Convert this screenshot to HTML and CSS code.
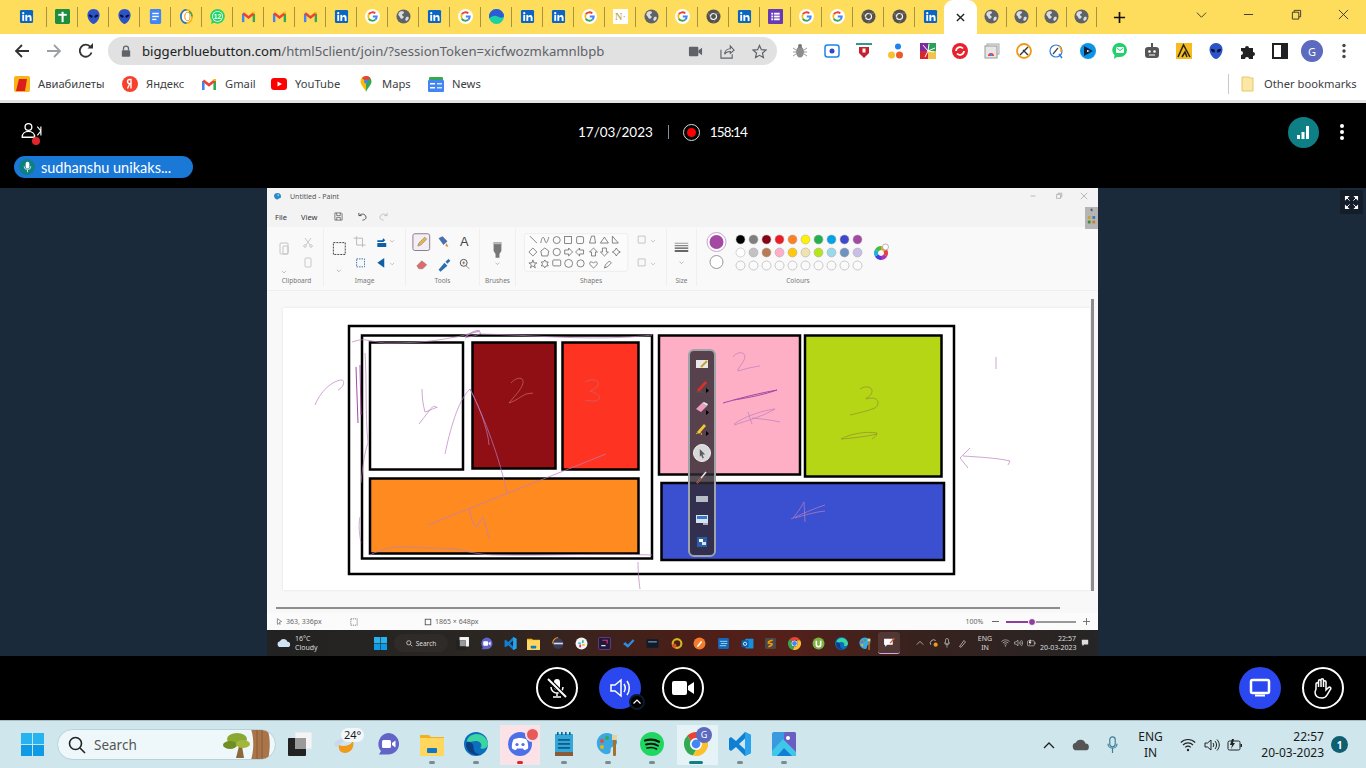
FILE: index.html
```html
<!DOCTYPE html>
<html lang="en">
<head>
    <meta name="viewport" content="width=device-width, initial-scale=1.0">
    <meta charset="UTF-8">
    <title>BigBlueButton</title>
    <link rel="stylesheet" href="styles.css">
</head>
<body>
    <!-- Shared icons -->
    <svg class="sprite" aria-hidden="true">
        <symbol id="in" viewBox="0 0 16 16"><rect x="1" y="1" width="14" height="14" rx="1.5" fill="#0a66c2"/><g fill="#fff"><circle cx="4.5" cy="4.4" r="1.2"/><rect x="3.5" y="6.3" width="2" height="6.4"/><rect x="6.8" y="6.3" width="2" height="6.4"/><path d="M8.6 8.6c.3-2.800 4.800-3.200 4.800.6v3.500h-2V9.500c0-1.500-2.800-1.400-2.800.3z"/></g></symbol>
        <symbol id="cross" viewBox="0 0 16 16"><rect x="0" y="0" width="16" height="16" rx="1.500" fill="#1e8e3e"/><rect x="7" y="3" width="2.200" height="11" fill="#fff"/><rect x="3.500" y="5.200" width="9" height="2" fill="#fff"/></symbol>
        <symbol id="alien" viewBox="0 0 16 16"><path d="M8 0C4 0 1.500 3 1.500 6.500 1.500 11 5.500 16 8 16s6.500-5 6.500-9.500C14.500 3 12 0 8 0z" fill="#2b54c9"/><ellipse cx="5" cy="7.500" rx="2.300" ry="1.300" transform="rotate(30 5 7.500)" fill="#0b1030"/><ellipse cx="11" cy="7.500" rx="2.300" ry="1.300" transform="rotate(-30 11 7.500)" fill="#0b1030"/></symbol>
        <symbol id="docs" viewBox="0 0 16 16"><rect x="2" y="0" width="12" height="16" rx="1.500" fill="#4285f4"/><g fill="#fff"><rect x="4.500" y="4" width="7" height="1.500"/><rect x="4.500" y="7.200" width="7" height="1.500"/><rect x="4.500" y="10.400" width="4.500" height="1.500"/></g></symbol>
        <symbol id="ring" viewBox="0 0 16 16"><ellipse cx="8" cy="8" rx="6" ry="7" fill="#fff" stroke="#f4b400" stroke-width="1.800"/><path d="M8 1C4.500 1 2 4 2 8s2.500 7 6 7" fill="none" stroke="#1a73e8" stroke-width="1.800"/><path d="M11 2.500c2 1.500 3 3.500 3 5.500" fill="none" stroke="#34a853" stroke-width="1.800"/><ellipse cx="9" cy="8" rx="2.800" ry="4.500" fill="none" stroke="#ea8600" stroke-width="1"/></symbol>
        <symbol id="gmail" viewBox="0 0 16 16"><g fill="none" stroke-width="2.600"><path d="M2.300 14V5" stroke="#4285f4"/><path d="M13.700 14V5" stroke="#34a853"/><path d="M2.300 4.500L8 9l5.700-4.500" stroke="#ea4335"/><path d="M13.700 3v2" stroke="#fbbc04"/></g></symbol>
        <symbol id="g" viewBox="0 0 16 16"><circle cx="8" cy="8" r="8" fill="#fff"/><g fill="none" stroke-width="2"><path d="M4.100 5.700A4.500 4.500 0 0 1 11 4.700" stroke="#ea4335"/><path d="M4.100 5.700a4.500 4.500 0 0 0 0 4.600" stroke="#fbbc04"/><path d="M4.100 10.300A4.500 4.500 0 0 0 11 11.300" stroke="#34a853"/><path d="M11 11.300A4.500 4.500 0 0 0 12.500 8H8.300" stroke="#4285f4"/></g></symbol>
        <symbol id="globe" viewBox="0 0 16 16"><circle cx="8" cy="8" r="7.500" fill="#5f6368"/><path d="M5 2.500c2-.6 4 0 3.500 1.500S6 5 6.500 6.500 9 7.500 8 9 5 11 4.500 9 2 7 2.500 5.500 4 3 5 2.500zM11 8.500c1.500-.8 3 0 2.500 1.500s-2 3-3 2.500-.5-3 .5-4z" fill="#dadce0"/></symbol>
        <symbol id="wave" viewBox="0 0 16 16"><circle cx="8" cy="8" r="8" fill="#19d3a2"/><path d="M0 8a8 8 0 0 1 16 0c-3 2.500-5 .5-8-.5S3 8 0 10z" fill="#2d5bd7"/></symbol>
        <symbol id="chromeg" viewBox="0 0 16 16"><circle cx="8" cy="8" r="7.500" fill="#55524e"/><circle cx="8" cy="8" r="3.800" fill="#fff"/><circle cx="8" cy="8" r="2.600" fill="#55524e"/><path d="M8 4.500h6.500M5 9.500L2 4M10.500 10.500L7.500 15" stroke="#8a8885" stroke-width=".800"/></symbol>
        <symbol id="forms" viewBox="0 0 16 16"><rect width="16" height="16" rx="1" fill="#673ab7"/><g fill="#fff"><rect x="3.500" y="4" width="2" height="2"/><rect x="3.500" y="7" width="2" height="2"/><rect x="3.500" y="10" width="2" height="2"/><rect x="6.500" y="4" width="6" height="2"/><rect x="6.500" y="7" width="6" height="2"/><rect x="6.500" y="10" width="6" height="2"/></g></symbol>

        <symbol id="win" viewBox="0 0 24 24"><g fill="#0f9ae6"><rect x="0" y="0" width="11.500" height="11.500" fill="#27b2f0"/><rect x="12.500" y="0" width="11.500" height="11.500" fill="#27b2f0"/><rect x="0" y="12.500" width="11.500" height="11.500"/><rect x="12.500" y="12.500" width="11.500" height="11.500"/></g></symbol>
        <symbol id="taskview" viewBox="0 0 24 24"><rect x="7" y="0" width="17" height="17" rx="1" fill="#f4f4f4" stroke="#dfe6e8"/><rect x="0" y="6" width="18" height="18" rx="1" fill="#222"/><path d="M7 6h11v11H7z" fill="#9a9a9a"/></symbol>
        <symbol id="meet" viewBox="0 0 24 24"><path d="M12 1a11 11 0 0 1 11 11c0 6-5 10.500-11 10.500H3L5 19a11 11 0 0 1 7-18z" fill="#6264c8"/><rect x="6" y="8" width="9" height="8" rx="1.500" fill="#fff"/><path d="M16 11l3.500-2.500v7L16 13z" fill="#fff"/></symbol>
        <symbol id="folder" viewBox="0 0 24 24"><path d="M0 3h9l2 2h13v19H0z" fill="#f3b21b"/><rect x="0" y="6" width="24" height="18" fill="#ffd75e"/><rect x="7" y="16" width="10" height="5" rx="1" fill="#0f78c9"/></symbol>
        <symbol id="edge" viewBox="0 0 24 24"><circle cx="12" cy="12" r="12" fill="#0c6fbd"/><path d="M3 8C6 0 21-1 24 11c.500 5-5 7-8 5 3-2 1-7-4-7C7 9 3 12 3 8z" fill="#3bd5a4"/><path d="M2 12c0 8 8 13 15 10-5 1-8-3-7.500-8C9 11 3 7 2 12z" fill="#0a3f85"/></symbol>
        <symbol id="discord" viewBox="0 0 24 24"><circle cx="12" cy="12" r="12" fill="#4d6fe8"/><path d="M5.500 7.500c4-2 9-2 13 0 1.500 3 2 6 1.500 9-1.500 1-3 1.500-4 1.500l-1-1.500h-6L8 18c-1 0-2.500-.5-4-1.500-.5-3 0-6 1.500-9z" fill="#fff"/><circle cx="9" cy="12.500" r="1.600" fill="#4d6fe8"/><circle cx="15" cy="12.500" r="1.600" fill="#4d6fe8"/></symbol>
        <symbol id="notepad" viewBox="0 0 24 24"><rect x="3" y="2" width="18" height="19" fill="#35a6d8"/><rect x="3" y="20" width="18" height="4" fill="#8a5a3a"/><g fill="#0b5f8f"><rect x="5" y="0" width="1.600" height="3"/><rect x="9" y="0" width="1.600" height="3"/><rect x="13" y="0" width="1.600" height="3"/><rect x="17" y="0" width="1.600" height="3"/><rect x="6" y="7" width="12" height="1.800"/><rect x="6" y="11" width="12" height="1.800"/><rect x="6" y="15" width="12" height="1.800"/></g></symbol>
        <symbol id="palette" viewBox="0 0 24 24"><path d="M11 1C4 1 0 7 1 13s7 10 11 9 2-4 3-6 5-1 6-5-4-10-10-10z" fill="#38a9e3"/><circle cx="6" cy="9" r="2" fill="#e84b3c"/><circle cx="6" cy="15" r="2" fill="#f4b400"/><circle cx="11" cy="6" r="2" fill="#34a853"/><rect x="17" y="6" width="3" height="18" rx="1" fill="#a8702f"/><rect x="16" y="3" width="5" height="5" fill="#e8d29a"/></symbol>
        <symbol id="spotify" viewBox="0 0 24 24"><circle cx="12" cy="12" r="12" fill="#1ed760"/><g fill="none" stroke="#111" stroke-linecap="round"><path d="M5 8.500c5-1.500 10-1 14 1.300" stroke-width="2.200"/><path d="M6 12.500c4-1 9-.7 12 1.200" stroke-width="1.900"/><path d="M7 16c3-.8 7-.5 9.500 1" stroke-width="1.600"/></g></symbol>
        <symbol id="chrome" viewBox="0 0 24 24"><path d="M12 0a12 12 0 0 1 10.400 6H12a6 6 0 0 0-5.200 3L3.500 3.500A12 12 0 0 1 12 0z" fill="#ea4335"/><path d="M3.500 3.500L6.800 9a6 6 0 0 0 5.200 9l-3 5.600A12 12 0 0 1 3.500 3.500z" fill="#34a853"/><path d="M22.400 6A12 12 0 0 1 9 23.600L12 18a6 6 0 0 0 5.200-9l-.5-3z" fill="#fbc02d"/><circle cx="12" cy="12" r="5.600" fill="#fff"/><circle cx="12" cy="12" r="4.400" fill="#4285f4"/></symbol>
        <symbol id="vscode" viewBox="0 0 24 24"><path d="M17 0l6 3v18l-6 3-9-9-5 4-2-1.500V6.500L3 5l5 4zM17 6.500L11 12l6 5.500z" fill="#0f7fd4"/><path d="M17 0l6 3v18l-6 3z" fill="#2aa3ee"/></symbol>
        <symbol id="photos" viewBox="0 0 24 24"><rect x="0" y="0" width="24" height="24" rx="2" fill="#3a9ae0"/><rect x="12" y="0" width="12" height="24" rx="2" fill="#6a5fc1"/><circle cx="16" cy="6" r="2" fill="#fff"/><path d="M0 19L11 7l13 13v2a2 2 0 0 1-2 2H2a2 2 0 0 1-2-2z" fill="#3fc6e8"/><path d="M5 24l7-8 8 8z" fill="#0f7fd4"/></symbol>
        <symbol id="cloud" viewBox="0 0 24 16"><path d="M6 15a5 5 0 0 1-1-9.900A7 7 0 0 1 18 6a4.500 4.500 0 0 1 0 9z" fill="currentColor"/></symbol>
        <symbol id="wifi" viewBox="0 0 16 14"><g fill="none" stroke="currentColor" stroke-width="1.100"><path d="M.8 4.500c4-4 10.400-4 14.400 0"/><path d="M3 7c2.800-2.800 7.200-2.800 10 0"/><path d="M5.200 9.400c1.600-1.500 4-1.500 5.600 0"/></g><circle cx="8" cy="12" r="1.200" fill="currentColor"/></symbol>
        <symbol id="vol" viewBox="0 0 16 14"><path d="M1 5h2.500L7 2v10L3.500 9H1z" fill="none" stroke="currentColor"/><path d="M9 5c1 1.300 1 2.700 0 4M11 3c2 2.500 2 5.500 0 8M13 1.500c3 3.500 3 7.500 0 11" fill="none" stroke="currentColor"/></symbol>
        <symbol id="batt" viewBox="0 0 16 14"><rect x="1" y="3" width="12" height="9" rx="1.500" fill="none" stroke="currentColor"/><rect x="13.500" y="6" width="1.500" height="3" fill="currentColor"/><path d="M5 1L3 7h2l-1 4 4-6H6l1-4z" fill="currentColor"/></symbol>
        <symbol id="micline" viewBox="0 0 12 20"><rect x="3" y="1" width="6" height="11" rx="3" fill="none" stroke="currentColor" stroke-width="1.300"/><path d="M1 8.500a5 5 0 0 0 10 0M6 14v5" fill="none" stroke="currentColor" stroke-width="1.300"/></symbol>
    </svg>

    <header class="chrome">
        <div class="tabstrip">
            <div class="tab tab-first"><svg class="fav"><use href="#in"/></svg></div>
            <div class="tab"><svg class="fav"><use href="#cross"/></svg></div>
            <div class="tab"><svg class="fav"><use href="#alien"/></svg></div>
            <div class="tab"><svg class="fav"><use href="#alien"/></svg></div>
            <div class="tab"><svg class="fav"><use href="#docs"/></svg></div>
            <div class="tab"><svg class="fav"><use href="#ring"/></svg></div>
            <div class="tab"><svg class="fav" viewBox="0 0 16 16"><circle cx="8" cy="7.800" r="7.800" fill="#25d366"/><path d="M1 16l1.500-5 3 3z" fill="#25d366"/><circle cx="8" cy="7.800" r="5.800" fill="#fff"/><circle cx="8" cy="7.800" r="5" fill="#25d366"/><text x="8" y="10.600" class="svg-num">12</text></svg></div>
            <div class="tab"><svg class="fav"><use href="#gmail"/></svg></div>
            <div class="tab"><svg class="fav"><use href="#gmail"/></svg></div>
            <div class="tab"><svg class="fav"><use href="#gmail"/></svg></div>
            <div class="tab"><svg class="fav"><use href="#in"/></svg></div>
            <div class="tab"><svg class="fav"><use href="#g"/></svg></div>
            <div class="tab"><svg class="fav"><use href="#globe"/></svg></div>
            <div class="tab"><svg class="fav"><use href="#in"/></svg></div>
            <div class="tab"><svg class="fav"><use href="#g"/></svg></div>
            <div class="tab"><svg class="fav"><use href="#wave"/></svg></div>
            <div class="tab"><svg class="fav"><use href="#in"/></svg></div>
            <div class="tab"><svg class="fav"><use href="#in"/></svg></div>
            <div class="tab"><svg class="fav"><use href="#g"/></svg></div>
            <div class="tab"><svg class="fav" viewBox="0 0 16 16"><rect width="16" height="16" fill="#fff"/><text x="8" y="12" class="svg-n">N·</text></svg></div>
            <div class="tab"><svg class="fav"><use href="#globe"/></svg></div>
            <div class="tab"><svg class="fav"><use href="#g"/></svg></div>
            <div class="tab"><svg class="fav"><use href="#chromeg"/></svg></div>
            <div class="tab"><svg class="fav"><use href="#in"/></svg></div>
            <div class="tab"><svg class="fav"><use href="#forms"/></svg></div>
            <div class="tab"><svg class="fav"><use href="#g"/></svg></div>
            <div class="tab"><svg class="fav"><use href="#g"/></svg></div>
            <div class="tab"><svg class="fav"><use href="#chromeg"/></svg></div>
            <div class="tab"><svg class="fav"><use href="#chromeg"/></svg></div>
            <div class="tab tab-nosep"><svg class="fav"><use href="#in"/></svg></div>
            <div class="tab-active"><svg class="tab-close" viewBox="0 0 10 10"><path d="M1 1l8 8M9 1L1 9"/></svg></div>
            <div class="tab tab-narrow"><svg class="fav"><use href="#globe"/></svg></div>
            <div class="tab tab-narrow"><svg class="fav"><use href="#globe"/></svg></div>
            <div class="tab tab-narrow"><svg class="fav"><use href="#globe"/></svg></div>
            <div class="tab tab-narrow"><svg class="fav"><use href="#globe"/></svg></div>
            <svg class="new-tab" viewBox="0 0 14 14"><path d="M7 1v12M1 7h12"/></svg>
            <div class="win-buttons">
                <svg viewBox="0 0 12 12"><path d="M1 4l5 5 5-5"/></svg>
                <svg viewBox="0 0 12 12"><path d="M1 6h10"/></svg>
                <svg viewBox="0 0 12 12"><path d="M1.500 3.500h7v7.500h-7zM3.500 3.500V1.500h7v7h-2"/></svg>
                <svg viewBox="0 0 12 12"><path d="M1 1l10 10M11 1L1 11"/></svg>
            </div>
        </div>

        <div class="toolbar">
            <svg class="nav-icon" viewBox="0 0 16 16"><path d="M15 8H2M8 2L2 8l6 6"/></svg>
            <svg class="nav-icon nav-off" viewBox="0 0 16 16"><path d="M1 8h13M8 2l6 6-6 6"/></svg>
            <svg class="nav-icon" viewBox="0 0 16 16"><path d="M13.500 9.500A6 6 0 1 1 12.500 4"/><path class="nav-fill" d="M9.500 5.500H15V0z"/></svg>
            <div class="omnibox">
                <svg class="lock" viewBox="0 0 12 14"><path d="M3 6V4a3 3 0 0 1 6 0v2" fill="none" stroke="#5f6368" stroke-width="1.500"/><rect x="1" y="6" width="10" height="8" rx="1" fill="#5f6368"/></svg>
                <span class="url"><b>biggerbluebutton.com</b>/html5client/join/?sessionToken=xicfwozmkamnlbpb</span>
                <svg class="omni-icon omni-cam" viewBox="0 0 16 16"><rect x="1" y="3" width="10" height="10" rx="1" fill="#5f6368"/><path d="M11 7l4-3v8l-4-3z" fill="#5f6368"/></svg>
                <svg class="omni-icon" viewBox="0 0 16 16"><path d="M1 6v9h12v-4M5 11c0-4 3-6 6-6V2l4 4.500L11 10V8c-3 0-5 1-6 3z" fill="none" stroke="#5f6368" stroke-width="1.200"/></svg>
                <svg class="omni-icon" viewBox="0 0 16 16"><path d="M8 1.500l2 4.500 4.800.5-3.600 3.200 1 4.800L8 12.100l-4.200 2.400 1-4.800L1.200 6.500 6 6z" fill="none" stroke="#5f6368" stroke-width="1.300"/></svg>
            </div>
            <div class="extensions">
                <svg viewBox="0 0 16 16"><ellipse cx="8" cy="9" rx="4" ry="5.500" fill="#8d8d8d"/><circle cx="8" cy="3" r="2" fill="#777"/><path d="M1 5l3 2M15 5l-3 2M1 9h3M15 9h-3M1 13l3-2M15 13l-3-2" stroke="#999"/></svg>
                <svg viewBox="0 0 16 16"><rect x="1" y="2" width="14" height="12" rx="2.500" fill="#fff" stroke="#1a84f0" stroke-width="1.500"/><circle cx="8" cy="8" r="2.500" fill="#3048c8"/></svg>
                <svg viewBox="0 0 16 16"><rect x="0" y="0" width="16" height="2" fill="#2a9d8f"/><path d="M3 4h10v6l-5 5-5-5z" fill="#c8202c"/><rect x="6.500" y="5.500" width="3" height="4" fill="#fff"/></svg>
                <svg viewBox="0 0 16 16"><circle cx="10" cy="3.500" r="3" fill="#1a84f0"/><circle cx="3.500" cy="12" r="3.500" fill="#fbc02d"/><circle cx="11.500" cy="12" r="3.500" fill="#ea5a2c"/></svg>
                <svg viewBox="0 0 16 16"><rect width="8" height="8" fill="#7b2c9e"/><rect x="8" width="8" height="8" fill="#2aa05a"/><rect y="8" width="8" height="8" fill="#d8262c"/><rect x="8" y="8" width="8" height="8" fill="#f2c14e"/><path d="M8 8L3 2M8 8l1-7M8 8l7-3M8 8l6 1M8 8l-3 6" stroke="#fff"/></svg>
                <svg viewBox="0 0 16 16"><circle cx="8" cy="8" r="8" fill="#e8212e"/><path d="M4 8a4 4 0 0 1 7-2.500M12 8a4 4 0 0 1-7 2.500" fill="none" stroke="#fff" stroke-width="1.800"/></svg>
                <svg viewBox="0 0 16 16"><rect x="3" y="1" width="12" height="10" fill="#eee" stroke="#aaa"/><rect x="1" y="3" width="12" height="12" fill="#e6e6e6" stroke="#999"/><path d="M4 13a3 3 0 0 1 6 0z" fill="#ea4335"/><rect x="6" y="11" width="2" height="2" fill="#4285f4"/></svg>
                <svg viewBox="0 0 16 16"><circle cx="8" cy="8" r="7" fill="#fff" stroke="#f09a1a" stroke-width="1.800"/><path d="M4 12l8-8M7 7l5 5" stroke="#333" stroke-width="1.400"/></svg>
                <svg viewBox="0 0 16 16"><circle cx="8" cy="8" r="6" fill="#fff" stroke="#2b7de0" stroke-width="1.200"/><path d="M11 3a6 6 0 0 1 2 6" fill="none" stroke="#f09a1a" stroke-width="1.600"/><path d="M5 11l5-6" stroke="#444" stroke-width="1.200"/><path d="M11 11l3 4" stroke="#2b7de0" stroke-width="1.400"/></svg>
                <svg viewBox="0 0 16 16"><circle cx="8" cy="8" r="8" fill="#0b95e8"/><path d="M4 3l9 5-9 5z" fill="#14213d"/><path d="M7 7l3 1-3 1z" fill="#fff"/></svg>
                <svg viewBox="0 0 16 16"><path d="M8 0a7 7 0 0 1 0 14H5l-3 2 .500-4A7 7 0 0 1 8 0z" fill="#23d06d"/><rect x="4" y="4" width="8" height="6" rx="1" fill="#fff"/><path d="M4.500 5L8 7.500 11.500 5" fill="none" stroke="#23d06d"/></svg>
                <svg viewBox="0 0 16 16"><rect x="1" y="4" width="14" height="11" rx="3" fill="#555"/><rect x="7" y="1" width="2" height="3" fill="#555"/><circle cx="8" cy="1" r="1.200" fill="#555"/><circle cx="5.500" cy="8.500" r="1.300" fill="#fff"/><circle cx="10.500" cy="8.500" r="1.300" fill="#fff"/><rect x="5" y="11.500" width="6" height="1" fill="#fff"/></svg>
                <svg viewBox="0 0 16 16"><rect width="16" height="16" fill="#f6bb1c"/><path d="M2 14L7.500 2 14 14M6 14l3-5 2 5" fill="none" stroke="#222" stroke-width="1.500"/></svg>
                <svg class="ext-wide"><use href="#alien"/></svg>
                <svg viewBox="0 0 16 16"><path d="M1 5h4a2 2 0 1 1 4 0h4v4a2 2 0 1 1 0 4v3H9a2 2 0 1 0-4 0H1v-4a2 2 0 1 0 0-4z" fill="#222"/></svg>
                <svg viewBox="0 0 16 16"><rect x="1" y="1" width="14" height="14" fill="#fff" stroke="#202124" stroke-width="2"/><rect x="9" y="1" width="6" height="14" fill="#202124"/></svg>
                <span class="avatar">G</span>
                <svg viewBox="0 0 16 16"><circle cx="8" cy="2.500" r="1.700" fill="#444"/><circle cx="8" cy="8" r="1.700" fill="#444"/><circle cx="8" cy="13.500" r="1.700" fill="#444"/></svg>
            </div>
        </div>

        <nav class="bookmarks">
            <div class="bm bm-avia"><svg class="bm-icon" viewBox="0 0 16 16"><rect width="16" height="16" rx="2" fill="#f9b418"/><path d="M5 3h8l-2 12H2z" fill="#dd1c1c"/></svg>Авиабилеты</div>
            <div class="bm bm-ya"><svg class="bm-icon" viewBox="0 0 16 16"><circle cx="8" cy="8" r="8" fill="#f8412c"/><path d="M9 12.500V3.500H7.800c-3 0-3 4.200 0 4.200H9M7.800 7.700L5.500 12.500" fill="none" stroke="#fff" stroke-width="1.400"/></svg>Яндекс</div>
            <div class="bm bm-gmail"><svg class="bm-icon"><use href="#gmail"/></svg>Gmail</div>
            <div class="bm bm-yt"><svg class="bm-icon" viewBox="0 0 16 16"><rect y="2" width="16" height="12" rx="3" fill="#f00"/><path d="M6.500 5.500L11 8l-4.500 2.500z" fill="#fff"/></svg>YouTube</div>
            <div class="bm bm-maps"><svg class="bm-icon" viewBox="0 0 16 16"><path d="M8 0a5.500 5.500 0 0 1 5.500 5.500C13.500 9 10 11 8 16z" fill="#34a853"/><path d="M8 0a5.500 5.500 0 0 0-5.500 5.500C2.500 9 6 11 8 16z" fill="#fbbc04"/><path d="M4 2a5.500 5.500 0 0 1 8.500 0L8 6z" fill="#ea4335"/><circle cx="8" cy="5.500" r="2" fill="#4285f4"/></svg>Maps</div>
            <div class="bm bm-news"><svg class="bm-icon" viewBox="0 0 16 16"><rect x="1" y="1" width="14" height="5" rx="1" fill="#34a853"/><rect x="0" y="4" width="16" height="12" rx="1" fill="#4285f4"/><rect x="2" y="7" width="5" height="1.500" fill="#fff"/><rect x="2" y="11" width="5" height="1.500" fill="#fff"/><rect x="9" y="7" width="5" height="1.500" fill="#d2e3fc"/><rect x="9" y="11" width="5" height="1.500" fill="#d2e3fc"/></svg>News</div>
            <div class="bm-other">
                <svg class="bm-icon" viewBox="0 0 16 16"><path d="M2 1h7l1 1h3v13H2z" fill="#fce8a6" stroke="#e8c867"/></svg>Other bookmarks
            </div>
        </nav>
    </header>

    <main class="meeting">
        <div class="meet-nav">
            <div class="users-btn">
                <svg viewBox="0 0 24 18"><circle cx="8" cy="4.500" r="3.800" fill="none" stroke="#fff" stroke-width="1.500"/><path d="M1 16c0-4 3-6.500 7-6.500s7 2.500 7 6.500z" fill="none" stroke="#fff" stroke-width="1.500"/><path d="M22 4v10M22 9l-4-5M22 9l-4 5" fill="none" stroke="#fff" stroke-width="1.300"/></svg>
                <span class="users-dot"></span>
            </div>
            <div class="meet-info">
                <span class="meet-date">17/03/2023</span>
                <span class="meet-sep"></span>
                <span class="rec-icon"></span>
                <span class="meet-time">158:14</span>
            </div>
            <div class="meet-right">
                <span class="signal-btn"><svg viewBox="0 0 16 16"><rect x="1" y="11" width="3" height="4" fill="#fff"/><rect x="5.500" y="8" width="3" height="7" fill="#fff"/><rect x="10" y="2" width="3" height="13" fill="#fff"/></svg></span>
                <svg class="kebab" viewBox="0 0 6 18"><circle cx="3" cy="3" r="2" fill="#fff"/><circle cx="3" cy="9" r="2" fill="#fff"/><circle cx="3" cy="15" r="2" fill="#fff"/></svg>
            </div>
        </div>
        <div class="talkers">
            <div class="talker">
                <span class="talker-mic"><svg viewBox="0 0 12 16"><rect x="3.500" y="1" width="5" height="9" rx="2.500" fill="#fff"/><path d="M1.500 7a4.500 4.500 0 0 0 9 0M6 12v3" fill="none" stroke="#fff"/></svg></span>
                sudhanshu unikaks...
            </div>
        </div>

        <section class="stage">
            <div class="paint">
                <div class="paint-title">
                    <svg class="paint-logo" viewBox="0 0 10 10"><path d="M5 0a5 5 0 0 1 5 5c0 3-2 2-3 3s-2 2-4 1-3-3-3-5 2-4 5-4z" fill="#2b8bc6"/><circle cx="6" cy="3" r="1.200" fill="#9fdcf5"/></svg>
                    <span>Untitled - Paint</span>
                    <div class="paint-winbtns">
                        <svg viewBox="0 0 10 10"><path d="M2 5h6"/></svg>
                        <svg viewBox="0 0 10 10"><path d="M2 3h5v5H2zM4 3V1.500h4.500V6H7"/></svg>
                        <svg viewBox="0 0 10 10"><path d="M1 1l8 8M9 1L1 9"/></svg>
                    </div>
                </div>
                <div class="paint-menu">
                    <span>File</span>
                    <span>View</span>
                    <svg class="pm-save" viewBox="0 0 10 10"><path d="M1 1h7l1 1v7H1zM3 1v3h4V1M3 9V6h4v3" fill="none" stroke="#555" stroke-width=".800"/></svg>
                    <svg class="pm-undo" viewBox="0 0 10 10"><path d="M1 1v3h3M1.500 4C3 2 7 1.500 8.500 4.500S7 9 5 9" fill="none" stroke="#444"/></svg>
                    <svg class="pm-redo" viewBox="0 0 10 10"><path d="M9 1v3H6M8.500 4C7 2 3 1.500 1.500 4.500S3 9 5 9" fill="none" stroke="#bbb"/></svg>
                </div>
                <div class="ribbon">
                    <div class="rgroup rg-clip">
                        <svg viewBox="270 228 53 46">
                            <g fill="none" stroke="#c4c4c4"><rect x="280" y="243" width="8" height="11" rx="1"/><rect x="283" y="246" width="5" height="8" rx="1"/><path d="M282 271l2 2 2-2"/></g>
                            <g fill="none" stroke="#bdbdbd" stroke-width=".800"><path d="M305 238l5 7M311 238l-5 7"/><circle cx="305" cy="246" r="1.300"/><circle cx="311" cy="246" r="1.300"/><rect x="305" y="258" width="6" height="9" rx="1"/></g>
                        </svg>
                        <label>Clipboard</label>
                    </div>
                    <div class="rgroup rg-image">
                        <svg viewBox="324 228 82 46">
                            <rect x="333.500" y="242.500" width="12" height="12" fill="none" stroke="#444" stroke-dasharray="2 1"/>
                            <path d="M337 270l2 2 2-2" fill="none" stroke="#999" stroke-width=".700"/>
                            <path d="M357 236v9h9M354 238h9v9" fill="none" stroke="#bbb"/>
                            <path d="M378 240h5l1-2 2 2-2 2h-6zM378 243h9v4h-9z" fill="#0f5fa8"/>
                            <path d="M391 240l2 2 2-2M391 263l2 2 2-2" fill="none" stroke="#aaa" stroke-width=".700"/>
                            <rect x="357" y="259" width="8" height="8" fill="none" stroke="#3a78b8" stroke-dasharray="1.500 1"/>
                            <path d="M378 263l7-5v10z" fill="#0f5fa8"/>
                        </svg>
                        <label>Image</label>
                    </div>
                    <div class="rgroup rg-tools">
                        <svg viewBox="406 228 74 46">
                            <rect x="413" y="233.500" width="17" height="17" rx="2" fill="#f3eef3" stroke="#8e7b92"/>
                            <path d="M418 246l1-3 6-6 2 2-6 6z" fill="#e6b84a" stroke="#666" stroke-width=".500"/>
                            <path d="M439 238l4-2 5 5-4 4z" fill="#4a6fb0"/><path d="M447 243l2 4-3-1z" fill="#e0803a"/>
                            <text x="465" y="246" class="svg-a">A</text>
                            <path d="M417 266l5-5 5 4-4 4h-4z" fill="#e06a6a" stroke="#777" stroke-width=".500"/>
                            <path d="M439 270l6-7 3 3-7 6zM446 262l3-3 2 2-3 3z" fill="#2a6fb0"/>
                            <circle cx="464.500" cy="263" r="3.500" fill="none" stroke="#555"/><path d="M467 266l3 3M463 263h3M464.500 261.500v3" stroke="#555" stroke-width=".700"/>
                        </svg>
                        <label>Tools</label>
                    </div>
                    <div class="rgroup rg-brush">
                        <svg viewBox="480 228 36 46">
                            <path d="M494 242h8v9l-2 3v4h-4v-4l-2-3z" fill="#777"/><rect x="494" y="242" width="8" height="2" fill="#bbb"/>
                            <path d="M496 263l2 2 2-2" fill="none" stroke="#999" stroke-width=".700"/>
                        </svg>
                        <label>Brushes</label>
                    </div>
                    <div class="rgroup rg-shapes">
                        <svg viewBox="516 228 151 46">
                            <rect x="524.500" y="233.500" width="104" height="38" rx="2" fill="#fbfbfb" stroke="#eee"/>
                            <g fill="none" stroke="#555" stroke-width=".700">
                                <path d="M530 236l7 7M541 243c1-7 3-7 4-3s2 4 4-3"/><circle cx="557" cy="240" r="3.500"/><rect x="565" y="236.500" width="7" height="7"/><rect x="577" y="236.500" width="7" height="7" rx="1.500"/><path d="M590 243h6l-1-7h-3zM601 243l4-6 4 6zM613 243v-7l6 7z"/>
                                <path d="M533 248l4 4-4 4-4-4zM545 248l4 3-1 5h-6l-1-5z"/><circle cx="557" cy="252" r="3.700"/>
                                <path d="M565 250h4v-2l4 4-4 4v-2h-4zM584 250h-4v-2l-4 4 4 4v-2h4zM592 256v-4h-2l4-4 4 4h-2v4zM603 248v4h-2l4 4 4-4h-2v-4zM617 248l1.500 2.500 2.500 1.500-2.500 1.500-1.500 2.500-1.500-2.500-2.500-1.500 2.500-1.500z"/>
                                <path d="M533 260l1 3h3l-2.500 2 1 3-2.500-2-2.500 2 1-3-2.500-2h3zM545 260l1.200 2h2.300l-1.200 2 1.200 2h-2.300l-1.200 2-1.200-2h-2.300l1.200-2-1.200-2h2.300z"/>
                                <rect x="553" y="260" width="8" height="6" rx="1"/><circle cx="569" cy="263.500" r="4"/><circle cx="581" cy="263.500" r="3.600"/><path d="M594 268c-6-4-4-8 0-5 4-3 6 1 0 5zM605 268l1-3 4-4 2 2-4 4z"/>
                            </g>
                            <g fill="none" stroke="#c6c6c6"><path d="M639 236h7v7h-7zM652 240l2 2 2-2M639 259h7v7h-7zM652 263l2 2 2-2"/></g>
                        </svg>
                        <label>Shapes</label>
                    </div>
                    <div class="rgroup rg-size">
                        <svg viewBox="667 228 30 46">
                            <path d="M675 243h14" stroke="#555" stroke-width=".600"/><path d="M675 245.500h14" stroke="#444" stroke-width=".800"/><path d="M675 248h14" stroke="#333" stroke-width="1.100"/><path d="M675 251h14" stroke="#222" stroke-width="1.400"/>
                            <path d="M680 262l2 2 2-2" fill="none" stroke="#999" stroke-width=".700"/>
                        </svg>
                        <label>Size</label>
                    </div>
                    <div class="rgroup rg-colours">
                        <svg viewBox="697 228 202 46">
                            <circle cx="716.500" cy="242" r="9.500" fill="#fff" stroke="#c9a7cb"/><circle cx="716.500" cy="242" r="7" fill="#a349a4"/>
                            <circle cx="716.500" cy="262" r="6.500" fill="#fff" stroke="#999"/>
                            <g stroke="#a8a8a8" stroke-width=".500">
                                <circle cx="740.500" cy="239.500" r="4.500" fill="#000"/><circle cx="753.500" cy="239.500" r="4.500" fill="#7f7f7f"/><circle cx="766.500" cy="239.500" r="4.500" fill="#880015"/><circle cx="779.500" cy="239.500" r="4.500" fill="#ed1c24"/><circle cx="792.500" cy="239.500" r="4.500" fill="#ff7f27"/><circle cx="805.500" cy="239.500" r="4.500" fill="#fff200"/><circle cx="818.500" cy="239.500" r="4.500" fill="#22b14c"/><circle cx="831.500" cy="239.500" r="4.500" fill="#00a2e8"/><circle cx="844.500" cy="239.500" r="4.500" fill="#3f48cc"/><circle cx="857.500" cy="239.500" r="4.500" fill="#a349a4"/>
                                <circle cx="740.500" cy="252.500" r="4.500" fill="#fff"/><circle cx="753.500" cy="252.500" r="4.500" fill="#c3c3c3"/><circle cx="766.500" cy="252.500" r="4.500" fill="#b97a57"/><circle cx="779.500" cy="252.500" r="4.500" fill="#ffaec9"/><circle cx="792.500" cy="252.500" r="4.500" fill="#ffc90e"/><circle cx="805.500" cy="252.500" r="4.500" fill="#efe4b0"/><circle cx="818.500" cy="252.500" r="4.500" fill="#b5e61d"/><circle cx="831.500" cy="252.500" r="4.500" fill="#99d9ea"/><circle cx="844.500" cy="252.500" r="4.500" fill="#7092be"/><circle cx="857.500" cy="252.500" r="4.500" fill="#c8bfe7"/>
                            </g>
                            <g fill="#fafafa" stroke="#bdbdbd" stroke-width=".800">
                                <circle cx="740.500" cy="265.500" r="4.500"/><circle cx="753.500" cy="265.500" r="4.500"/><circle cx="766.500" cy="265.500" r="4.500"/><circle cx="779.500" cy="265.500" r="4.500"/><circle cx="792.500" cy="265.500" r="4.500"/><circle cx="805.500" cy="265.500" r="4.500"/><circle cx="818.500" cy="265.500" r="4.500"/><circle cx="831.500" cy="265.500" r="4.500"/><circle cx="844.500" cy="265.500" r="4.500"/><circle cx="857.500" cy="265.500" r="4.500"/>
                            </g>
                            <g fill="none" stroke-width="4">
                                <path d="M881 248a5 5 0 0 1 4.300 2.500" stroke="#f5a020"/><path d="M885.300 250.500a5 5 0 0 1 0 5" stroke="#e84040"/><path d="M885.300 255.500a5 5 0 0 1-4.300 2.500" stroke="#b030b0"/><path d="M881 258a5 5 0 0 1-4.300-2.500" stroke="#4040e0"/><path d="M876.700 255.500a5 5 0 0 1 0-5" stroke="#20b0e0"/><path d="M876.700 250.500a5 5 0 0 1 4.300-2.500" stroke="#40c040"/>
                            </g>
                            <circle cx="885.500" cy="247" r="3" fill="#fff" stroke="#888" stroke-width=".600"/>
                        </svg>
                        <label>Colours</label>
                    </div>
                </div>

                <div class="paint-work">
                    <div class="canvas">
                        <svg class="drawing" viewBox="283 308 807 282">
                            <g stroke="#000" stroke-width="2.500">
                                <rect x="349" y="326" width="605" height="248" fill="#fff"/>
                                <rect x="362" y="335.500" width="290" height="223" fill="#fff"/>
                                <rect x="370" y="342.500" width="93" height="127" fill="#fff"/>
                                <rect x="472.500" y="342.500" width="83" height="126" fill="#8f0f14"/>
                                <rect x="562.500" y="342.500" width="76" height="127" fill="#ff3322"/>
                                <rect x="370" y="478.500" width="268.500" height="75" fill="#ff8a20"/>
                                <rect x="659" y="335.500" width="141" height="139" fill="#ffafc5"/>
                                <rect x="805" y="335.500" width="136.500" height="141" fill="#b5d614"/>
                                <rect x="661.500" y="483" width="282.500" height="77" fill="#3b50d0"/>
                            </g>
                            <g class="ink">
                                <path d="M315 405C322 388 335 380 342 380c3 1 2 7-4 10"/>
                                <path d="M422 389c0 8 1 16 3 23 4-1 13-6 12-4-1-3-5-2-8 3-3 4-7 9-10 13"/>
                                <path d="M352 342c13-4 10-2 33 1 25 0 45-1 65-5 15-2 22-6 30-7-4-2-10 2-15 6 5-4 15-7 16-4-6 4-11 3-16 5"/>
                                <path d="M481 334c50 1 99 6 149 3 10-1 15-1 22-2"/>
                                <path class="ink-strong" d="M356 367l2 56M360 365l1 50"/>
                                <path d="M365 353c2 30 0 60 3 90-4 10-6 30-7 40M360 517c-2 10 0 20 1 26"/>
                                <path d="M370 555c12-6 20-8 33-8 20 1 35 1 54 2 15 4 27 6 40 6 50 1 100-2 155 0"/>
                                <path d="M445 454c5-24 13-54 25-65 8 15 18 40 19 56M470 389c15 30 30 70 37 104"/>
                                <path d="M428 525l178-71M469 508c2 8 3 16 8 19 2-4 4-8 6-10 2 6 4 14 6 21"/>
                                <path d="M638 562c0 10 1 20 2 27"/>
                                <path d="M733 357c5-7 15-5 11 3-2 5-7 9-6 11 7-2 14-4 22-5"/>
                                <path class="ink-strong" d="M723 403c17-5 37-10 54-13-17 6-37 9-43 10"/>
                                <path d="M734 424c11-8 31-14 41-15-10 6-25 11-41 16M748 412l4 12M752 418c10 1 20 2 28 4"/>
                                <path d="M996 357v12"/>
                                <path d="M963 456c15 1 35 2 47 5l-2 4M970 448l-10 10 8 10"/>
                                <path d="M793 518c7-8 9-13 11-16l1 20M791 519c9-4 24-11 34-14M795 518c10-3 20-6 30-7"/>
                            </g>
                            <path class="ink-red" d="M511 383c3-4 9-6 11-4 3 3-1 9-3 12-3 4-7 8-10 12 7-2 12-7 17-9l7-1"/>
                            <path class="ink-red" d="M585 382c7-4 15-2 13 3-2 4-8 6-8 6 7 2 12 6 8 9-3 2-8 1-13 0"/>
                            <path class="ink-olive" d="M860 389c6-4 13-2 12 3-1 5-7 6-6 7 14-4 14 6 9 9-7 3-17 5-25 7"/>
                            <path class="ink-olive" d="M841 439c9-5 24-8 36-6 0 3-4 5-5 6M841 439c14-1 27-3 36-5"/>
                        </svg>
                    </div>

                    <div class="hscroll"></div>
                    <div class="vscroll"></div>
                </div>

                <div class="paint-status">
                    <svg class="ps-icon" viewBox="0 0 10 10"><path d="M2 1l6 4-3 1 1 3-2-1-2 1z" fill="none" stroke="#666"/></svg>
                    <span class="ps-pos">363, 336px</span>
                    <svg class="ps-sel" viewBox="0 0 10 10"><rect x="1" y="1" width="8" height="8" fill="none" stroke="#666" stroke-dasharray="1.500 1"/></svg>
                    <svg class="ps-dim" viewBox="0 0 10 10"><rect x="1.500" y="1.500" width="7" height="7" fill="none" stroke="#444"/></svg>
                    <span>1865 × 648px</span>
                    <span class="ps-zoom">100%</span>
                    <span class="ps-minus"></span>
                    <div class="ps-slider"><i></i></div>
                    <svg class="ps-plus" viewBox="0 0 8 8"><path d="M4 0v8M0 4h8"/></svg>
                </div>

                <div class="mini-task">
                    <div class="mini-weather">
                        <svg class="mini-cloud"><use href="#cloud"/></svg>
                        <div><span>16°C</span><span>Cloudy</span></div>
                    </div>
                    <svg class="mini-win"><use href="#win"/></svg>
                    <div class="mini-search">
                        <svg viewBox="0 0 10 10"><circle cx="4" cy="4" r="3" fill="none" stroke="#eee"/><path d="M6.500 6.500L9 9" stroke="#eee"/></svg>Search
                    </div>
                    <div class="mini-apps">
                        <svg><use href="#taskview"/></svg>
                        <svg><use href="#meet"/></svg>
                        <svg class="mini-on"><use href="#vscode"/></svg>
                        <svg class="mini-on"><use href="#folder"/></svg>
                        <svg viewBox="0 0 24 24"><circle cx="13" cy="12" r="10" fill="#3a3a5a"/><path d="M3 12a11 11 0 0 1 10-11" fill="none" stroke="#f59a1f" stroke-width="2"/><rect x="5" y="10.500" width="17" height="3" fill="#ddd"/></svg>
                        <svg viewBox="0 0 24 24"><circle cx="12" cy="12" r="11" fill="#f2f2f2"/><rect x="6" y="10" width="5" height="3" fill="#36c5f0"/><rect x="13" y="6" width="3" height="5" fill="#2eb67d"/><rect x="13" y="13" width="5" height="3" fill="#ecb22e"/><rect x="8" y="14" width="3" height="5" fill="#e01e5a"/></svg>
                        <svg class="mini-on" viewBox="0 0 24 24"><rect x="1" y="1" width="22" height="22" rx="2" fill="#1c1c3a" stroke="#a04ad0"/><rect x="6" y="15" width="8" height="2" fill="#fff"/><path d="M8 6h9v6" fill="none" stroke="#e0337a" stroke-width="2"/></svg>
                        <svg viewBox="0 0 24 24"><path d="M2 13l4-4 5 5L20 4l3 3-12 13z" fill="#2b8ce8"/></svg>
                        <svg viewBox="0 0 24 24"><rect x="1" y="4" width="22" height="16" rx="2" fill="#0d1b2a"/><rect x="4" y="8" width="16" height="2" fill="#8ba8c2"/></svg>
                        <svg viewBox="0 0 24 24"><circle cx="13" cy="12" r="8" fill="none" stroke="#d8b520" stroke-width="4"/><circle cx="8" cy="16" r="4" fill="#d8502a"/></svg>
                        <svg viewBox="0 0 24 24"><circle cx="12" cy="12" r="11" fill="#f57c2c"/><path d="M7 17l8-10 2 2-8 10z" fill="#fff"/></svg>
                        <svg viewBox="0 0 24 24"><rect x="2" y="2" width="20" height="20" rx="2" fill="#1566b7"/><g fill="#7fd0f5"><rect x="5" y="7" width="14" height="2"/><rect x="7" y="11" width="12" height="2"/><rect x="5" y="15" width="12" height="2"/></g></svg>
                        <svg viewBox="0 0 24 24"><rect x="8" y="3" width="15" height="18" rx="1" fill="#1490df"/><rect x="1" y="6" width="13" height="13" rx="1" fill="#0f5fa8"/><circle cx="7.500" cy="12.500" r="3" fill="none" stroke="#fff" stroke-width="1.500"/></svg>
                        <svg viewBox="0 0 24 24"><rect x="2" y="2" width="20" height="20" rx="2" fill="#4a4a4a"/><path d="M16 6c-6 1-8 3-8 5l7 2c0 2-3 4-7 5" fill="none" stroke="#ff9800" stroke-width="3"/></svg>
                        <svg><use href="#chrome"/></svg>
                        <svg class="mini-on" viewBox="0 0 24 24"><circle cx="12" cy="12" r="11" fill="#7cb342"/><path d="M8 7v7a4 4 0 0 0 8 0V7" fill="none" stroke="#fff" stroke-width="3"/></svg>
                        <svg class="mini-on"><use href="#edge"/></svg>
                        <svg class="mini-on"><use href="#palette"/></svg>
                        <span class="mini-current"><svg viewBox="0 0 24 24"><path d="M2 5h16v11H8l-4 4v-4H2z" fill="#fff"/><path d="M12 13l8-10 2 2-8 9z" fill="#d8503a"/></svg></span>
                    </div>
                    <div class="mini-tray">
                        <svg class="mt-chev" viewBox="0 0 10 10"><path d="M1 7l4-4 4 4" fill="none" stroke="#ccc"/></svg>
                        <svg class="mt-sync" viewBox="0 0 12 12"><path d="M2 8a4 4 0 0 1 6-5" fill="none" stroke="#ccc"/><circle cx="8" cy="8" r="2.500" fill="#f29a1a"/></svg>
                        <svg class="mt-mic"><use href="#micline"/></svg>
                        <svg class="mt-pen" viewBox="0 0 12 12"><path d="M2 10l6-8 2 2-6 7z" fill="none" stroke="#ccc"/></svg>
                        <div class="mt-lang"><span>ENG</span><span>IN</span></div>
                        <svg class="mt-sm"><use href="#wifi"/></svg>
                        <svg class="mt-sm"><use href="#vol"/></svg>
                        <svg class="mt-sm"><use href="#batt"/></svg>
                        <div class="mt-clock"><span>22:57</span><span>20-03-2023</span></div>
                        <svg class="mt-note" viewBox="0 0 10 10"><path d="M1 1h8v6H4L2 9V7H1z" fill="#ddd"/></svg>
                    </div>
                </div>

                <!-- Screen-annotation pen bar floating over the canvas -->
                <div class="pen-bar">
                    <svg viewBox="0 0 14 12"><rect x="1" y="2" width="12" height="8" fill="#e8e8e8"/><path d="M6 9l6-6" stroke="#c8a035" stroke-width="2"/></svg>
                    <svg viewBox="0 0 14 14"><path d="M2 11l8-9 2 2-8 9z" fill="#d8302a"/><path d="M1 13h7" stroke="#555"/><path d="M11 9l3 2.500-3 2.500z" fill="#000"/></svg>
                    <svg viewBox="0 0 14 14"><path d="M1 8l6-6 5 3-6 6z" fill="#ee9cc0"/><path d="M7 2l5 3 1-2-4-2z" fill="#dfe8ee"/><path d="M11 9l3 2.500-3 2.500z" fill="#000"/></svg>
                    <svg viewBox="0 0 14 14"><path d="M2 10l7-8 2 2-7 8z" fill="#f4c631"/><path d="M1 12c3-3 7-1 5 1" fill="none" stroke="#f4c631"/><path d="M11 9l3 2.500-3 2.500z" fill="#000"/></svg>
                    <span class="pen-cursor"><svg viewBox="0 0 10 12"><path d="M2 1l6 6H5l1.500 4-1.500.5L3.500 8 2 9.500z" fill="#5a5a62"/></svg></span>
                    <svg viewBox="0 0 14 14"><path d="M2 13l9-11" stroke="#e6e6e6" stroke-width="1.500"/><path d="M2 13l4-5" stroke="#a03a2a" stroke-width="1.500"/></svg>
                    <svg viewBox="0 0 14 12"><rect x="1" y="3" width="12" height="6" fill="#b8bcc4"/></svg>
                    <svg viewBox="0 0 14 14"><rect x="1" y="2" width="12" height="8" fill="#d6e4f2"/><rect x="2" y="3" width="10" height="3" fill="#3a78c8"/><rect x="8" y="10" width="5" height="2" fill="#aab"/></svg>
                    <svg viewBox="0 0 14 14"><rect x="2" y="2" width="10" height="10" fill="#2a5fa8"/><rect x="4" y="4" width="4" height="3" fill="#fff"/><rect x="7" y="7" width="4" height="3" fill="#d6e4f2"/></svg>
                </div>

                <div class="floater">
                    <svg viewBox="0 0 12 20"><path d="M7 1H5v2l2 1z" fill="#555"/><rect x="2" y="9" width="3" height="3" fill="#d4a017"/><rect x="7" y="9" width="3" height="3" fill="#2a7fc4"/><rect x="2" y="14" width="3" height="3" fill="#3a8a3a"/><rect x="7" y="14" width="3" height="3" fill="#d87a1a"/></svg>
                </div>
            </div>

            <span class="fullscreen"><svg viewBox="0 0 16 16"><path d="M1 1h5L1 6zM15 1h-5l5 5zM1 15h5l-5-5zM15 15h-5l5-5z" fill="#fff"/><path d="M3 3l3 3M13 3l-3 3M3 13l3-3M13 13l-3-3" stroke="#fff"/></svg></span>
        </section>

        <div class="meet-actions">
            <div class="action-group">
                <span class="action">
                    <svg viewBox="0 0 24 24"><rect x="9" y="3" width="6" height="11" rx="3" fill="#fff"/><path d="M6 11a6 6 0 0 0 12 0M12 17v3M8 21h8" fill="none" stroke="#fff" stroke-width="1.500"/><path d="M3 3l18 18" stroke="#000" stroke-width="4"/><path d="M3 3l18 18" stroke="#fff" stroke-width="2"/></svg>
                </span>
                <span class="action action-on">
                    <svg viewBox="0 0 24 24"><path d="M3 9h4l6-5v16l-6-5H3z" fill="none" stroke="#fff" stroke-width="1.500"/><path d="M16 8c1.500 2.500 1.500 5.500 0 8M19 5c3 4 3 10 0 14" fill="none" stroke="#fff" stroke-width="1.500"/></svg>
                    <span class="audio-more"><svg viewBox="0 0 10 10"><path d="M1.500 6.500L5 3l3.500 3.500" fill="none" stroke="#fff" stroke-width="1.200"/></svg></span>
                </span>
                <span class="action">
                    <svg viewBox="0 0 24 24"><rect x="1" y="5" width="15" height="14" rx="2" fill="#fff"/><path d="M17 10l6-4v12l-6-4z" fill="#fff"/></svg>
                </span>
            </div>
            <div class="action-group">
                <span class="action action-on">
                    <svg viewBox="0 0 24 24"><rect x="3" y="4" width="18" height="13" rx="1.500" fill="none" stroke="#fff" stroke-width="2.500"/><rect x="7" y="18.500" width="10" height="2" fill="#fff"/></svg>
                </span>
                <span class="action">
                    <svg viewBox="0 0 24 24"><path d="M5 13V8a1.200 1.200 0 0 1 2.500 0v3V5a1.200 1.200 0 0 1 2.500 0v6V4a1.200 1.200 0 0 1 2.500 0v7V6a1.200 1.200 0 0 1 2.500 0v8l2-2c2-2 4 0 2 2l-3 5c-1 2-3 3-5 3-4 0-7-2-7-6z" fill="#000" stroke="#fff" stroke-width="1.500"/></svg>
                </span>
            </div>
        </div>
    </main>

    <footer class="taskbar">
        <svg class="tb-win"><use href="#win"/></svg>
        <div class="tb-search">
            <svg class="tb-glass" viewBox="0 0 18 18"><circle cx="7.500" cy="7.500" r="6" fill="none" stroke="#222" stroke-width="1.600"/><path d="M12 12l5 5" stroke="#222" stroke-width="1.600"/></svg>
            <span>Search</span>
            <svg class="tb-tree" viewBox="0 0 54 31"><path d="M15 29l3-12h3l2 12z" fill="#8a6a3a"/><ellipse cx="16" cy="10" rx="10" ry="6" fill="#8aa832"/><ellipse cx="9" cy="16" rx="7" ry="4" fill="#6f8f22"/><ellipse cx="22" cy="15" rx="7" ry="4" fill="#a3b63e"/><path d="M30 0h16c4 8 3 22 1 31H30c3-10 3-22 0-31z" fill="#a9744a"/><path d="M36 0v31M41 0v31" stroke="#8a5a34"/></svg>
        </div>
        <div class="tb-app"><svg><use href="#taskview"/></svg></div>
        <div class="tb-app">
            <svg viewBox="0 0 24 24"><path d="M5 15c-4-1-3-7 2-7 2-4 6-3 7-1" fill="#c9d8ea"/><path d="M7 13a10 8 0 0 0 14-4c2 7-3 12-8 12s-7-4-6-8z" fill="#f09a1a"/></svg>
            <span class="tb-temp">24°</span>
        </div>
        <div class="tb-app"><svg><use href="#meet"/></svg></div>
        <div class="tb-app tb-open"><svg><use href="#folder"/></svg></div>
        <div class="tb-app tb-open"><svg><use href="#edge"/></svg></div>
        <div class="tb-app tb-open tb-discord">
            <svg><use href="#discord"/></svg>
            <span class="tb-badge"></span>
        </div>
        <div class="tb-app tb-open"><svg><use href="#notepad"/></svg></div>
        <div class="tb-app tb-open"><svg><use href="#palette"/></svg></div>
        <div class="tb-app tb-open"><svg><use href="#spotify"/></svg></div>
        <div class="tb-app tb-open tb-active">
            <svg><use href="#chrome"/></svg>
            <span class="tb-profile">G</span>
        </div>
        <div class="tb-app tb-open"><svg><use href="#vscode"/></svg></div>
        <div class="tb-app tb-open"><svg><use href="#photos"/></svg></div>

        <div class="tray">
            <svg class="tray-slot tray-chev" viewBox="0 0 32 16"><path d="M11 11l5-5 5 5" fill="none" stroke="#222" stroke-width="1.300"/></svg>
            <div class="tray-slot"><svg class="tray-cloud"><use href="#cloud"/></svg></div>
            <div class="tray-slot"><svg class="tray-mic"><use href="#micline"/></svg></div>
            <div class="tray-lang"><span>ENG</span><span>IN</span></div>
            <svg class="tray-sm"><use href="#wifi"/></svg>
            <svg class="tray-sm"><use href="#vol"/></svg>
            <svg class="tray-sm"><use href="#batt"/></svg>
            <div class="tray-clock"><span>22:57</span><span>20-03-2023</span></div>
            <span class="tray-note">1</span>
        </div>
    </footer>
</body>
</html>
```

FILE: styles.css
```css
/* General body styling */
body {
    margin: 0;
    width: 1366px;
    height: 768px;
    overflow: hidden;
    display: flex;
    flex-direction: column;
    font-family: "Noto Sans", "Open Sans", sans-serif;
    background: #000;
}

svg {
    display: block;
    flex: none;
}

.sprite {
    position: absolute;
    width: 0;
    height: 0;
}

.svg-num {
    font: bold 7px "Liberation Sans", sans-serif;
    fill: #fff;
    text-anchor: middle;
}

.svg-n {
    font: 11px "Liberation Serif", serif;
    fill: #b89a3a;
    text-anchor: middle;
}

.svg-a {
    font: 13px "Liberation Sans", sans-serif;
    fill: #444;
    text-anchor: middle;
}

/* Browser chrome */
.chrome {
    background: #fff;
}

.tabstrip {
    height: 34px;
    padding-left: 12px;
    display: flex;
    align-items: center;
    background: #ffdd5c;
}

.tab {
    width: 31px;
    height: 20px;
    box-sizing: border-box;
    display: flex;
    align-items: center;
    justify-content: center;
    border-right: 1px solid #a8913f;
    margin-top: -1px;
}

.tab-first {
    width: 35px;
    padding-right: 5px;
}

.tab-narrow {
    width: 30px;
}

.tab-nosep {
    border-right: none;
}

.fav {
    width: 15px;
    height: 15px;
}

.tab-active {
    width: 33px;
    height: 34px;
    margin-left: -2px;
    background: #fff;
    border-radius: 9px 9px 0 0;
    display: flex;
    align-items: center;
    justify-content: center;
    position: relative;
    z-index: 1;
}

.tab-close {
    width: 9px;
    height: 9px;
    fill: none;
    stroke: #202124;
    stroke-width: 1.500;
}

.new-tab {
    width: 13px;
    height: 13px;
    margin-left: 16px;
    fill: none;
    stroke: #111;
    stroke-width: 1.800;
}

.win-buttons {
    margin-left: auto;
    margin-top: -6px;
    width: 170px;
    padding-right: 17px;
    box-sizing: border-box;
    display: flex;
    justify-content: space-between;
}

.win-buttons svg {
    width: 11px;
    height: 11px;
    fill: none;
    stroke: #333;
    stroke-width: 1;
}

.toolbar {
    height: 34px;
    display: flex;
    align-items: center;
    padding-left: 14px;
}

.nav-icon {
    width: 16px;
    height: 16px;
    margin-right: 16px;
    fill: none;
    stroke: #333;
    stroke-width: 1.800;
}

.nav-off {
    stroke: #9aa0a6;
}

.nav-fill {
    fill: #333;
    stroke: none;
}

.omnibox {
    width: 669px;
    height: 28px;
    margin-left: -2px;
    border-radius: 14px;
    background: #e1e1e1;
    display: flex;
    align-items: center;
    box-sizing: border-box;
    padding-left: 13px;
}

.lock {
    width: 10px;
    height: 12px;
    margin-right: 11px;
}

.url {
    font-family: "Noto Sans", sans-serif;
    font-size: 13.150px;
    color: #5f6368;
    white-space: nowrap;
    width: 454px;
}

.url b {
    font-weight: 400;
    color: #202124;
}

.omni-icon {
    width: 15px;
    height: 15px;
    margin-left: 17px;
}

.omni-cam {
    margin-left: 92px;
}

.extensions {
    margin-left: 7px;
    display: flex;
    align-items: center;
}

.extensions > svg {
    width: 16px;
    height: 16px;
    margin: 0 8px;
}

.avatar {
    width: 22px;
    height: 22px;
    margin: 0 5px;
    border-radius: 50%;
    background: #5c6bc0;
    color: #fff;
    font-size: 11px;
    display: flex;
    align-items: center;
    justify-content: center;
}

.bookmarks {
    border-bottom: 3px solid #e4e4e4;
    box-sizing: border-box;
    height: 35px;
    padding-bottom: 1px;
    display: flex;
    align-items: center;
    font-size: 11.200px;
    color: #3c4043;
}

.bm {
    display: flex;
    align-items: center;
    white-space: nowrap;
}

.bm-icon {
    width: 16px;
    height: 16px;
    margin-right: 8px;
}

.bm-avia { margin-left: 14px; width: 108px; }
.bm-ya { width: 79px; }
.bm-gmail { width: 70px; }
.bm-yt { width: 87px; }
.bm-maps { width: 70px; }

.bm-other {
    margin-left: auto;
    width: 138px;
    height: 20px;
    box-sizing: border-box;
    padding-left: 11px;
    border-left: 1px solid #c8c8c8;
    display: flex;
    align-items: center;
    white-space: nowrap;
}

/* Meeting header */
.meeting {
    flex: 1;
    display: flex;
    flex-direction: column;
    color: #fff;
    font-family: "Lato", sans-serif;
}

.meet-nav {
    height: 45px;
    display: flex;
    align-items: flex-end;
    padding: 0 21px;
}

.users-btn {
    width: 557px;
    height: 32px;
    position: relative;
}

.users-btn svg {
    width: 22px;
    height: 16px;
    margin-top: 7px;
}

.users-dot {
    position: absolute;
    left: 11px;
    top: 21px;
    width: 8px;
    height: 8px;
    border-radius: 50%;
    background: #e0262b;
}

.meet-info {
    height: 32px;
    display: flex;
    align-items: center;
    font-size: 13.500px;
}

.meet-sep {
    width: 1px;
    height: 14px;
    background: #7f8f9f;
    margin: 0 15px;
}

.rec-icon {
    width: 9px;
    height: 9px;
    border: 3px solid #000;
    outline: 1px solid #ddd;
    border-radius: 50%;
    background: #f00;
    margin: 0 11px 0 0;
}

.meet-time {
    letter-spacing: -0.900px;
}

.meet-right {
    margin-left: auto;
    display: flex;
    align-items: center;
    gap: 20px;
    height: 32px;
}

.signal-btn {
    width: 31px;
    height: 31px;
    border-radius: 50%;
    background: #0f7f86;
    display: flex;
    align-items: center;
    justify-content: center;
}

.signal-btn svg {
    width: 16px;
    height: 16px;
}

.kebab {
    width: 6px;
    height: 18px;
}

.talkers {
    height: 32px;
    padding: 8px 0 0 14px;
}

.talker {
    width: 179px;
    height: 22px;
    border-radius: 11px;
    background: #1a78d6;
    display: flex;
    align-items: center;
    font-size: 14.500px;
    white-space: nowrap;
    box-sizing: border-box;
}

.talker-mic {
    width: 16px;
    height: 16px;
    margin: 0 6px 0 5px;
    border-radius: 50%;
    background: #0f7f86;
    display: flex;
    align-items: center;
    justify-content: center;
}

.talker-mic svg {
    width: 9px;
    height: 12px;
}

/* Shared screen */
.stage {
    height: 468px;
    background: #1b2a3a;
    position: relative;
    padding-left: 267px;
}

.fullscreen {
    position: absolute;
    left: 1340px;
    top: 2px;
    width: 23px;
    height: 24px;
    background: #141e2b;
    display: flex;
    align-items: center;
    justify-content: center;
}

.fullscreen svg {
    width: 15px;
    height: 15px;
}

.paint {
    width: 831px;
    height: 468px;
    position: relative;
    display: flex;
    flex-direction: column;
    background: #f8f8f8;
    color: #444;
    font-family: "Noto Sans", sans-serif;
    font-size: 7px;
}

.paint-title {
    height: 16px;
    padding-bottom: 2px;
    background: #f3f3f3;
    display: flex;
    align-items: center;
    padding-left: 7px;
    gap: 9px;
    color: #555;
}

.paint-logo {
    width: 7px;
    height: 7px;
}

.paint-winbtns {
    margin-left: auto;
    width: 59px;
    padding-right: 10px;
    display: flex;
    justify-content: space-between;
}

.paint-winbtns svg {
    width: 8px;
    height: 8px;
    fill: none;
    stroke: #999;
    stroke-width: .800;
}

.paint-menu {
    height: 21px;
    background: #f3f3f3;
    display: flex;
    align-items: center;
    padding-left: 8px;
    color: #333;
    font-size: 7.500px;
}

.paint-menu span {
    width: 26px;
}

.pm-save, .pm-undo, .pm-redo {
    width: 9px;
    height: 9px;
}

.pm-save { margin-left: 7px; }
.pm-undo { margin-left: 15px; }
.pm-redo { margin-left: 12px; }

.ribbon {
    height: 64px;
    padding-left: 3px;
    display: flex;
    background: #f9f9f9;
    border-bottom: 1px solid #efefef;
    box-sizing: border-box;
}

.rgroup {
    display: flex;
    flex-direction: column;
    border-right: 1px solid #efefef;
    box-sizing: border-box;
    margin: 2px 0 4px;
}

.rgroup svg {
    height: 46px;
    width: 100%;
    margin-top: -1px;
}

.rgroup label {
    text-align: center;
    color: #777;
    font-size: 6.500px;
    margin-top: 2px;
}

.rg-clip { width: 54px; }
.rg-image { width: 82px; }
.rg-tools { width: 74px; }
.rg-brush { width: 36px; }
.rg-shapes { width: 151px; }
.rg-size { width: 30px; }
.rg-colours { width: 202px; border-right: none; }

.paint-work {
    flex: 1;
    position: relative;
    padding: 17px 8px 0 16px;
    box-sizing: border-box;
}

.canvas {
    height: 282px;
    background: #fff;
    box-shadow: 0 0 2px #ddd;
}

.drawing {
    width: 807px;
    height: 282px;
}

.ink path {
    fill: none;
    stroke: #b980bc;
    stroke-width: .700;
}

.ink .ink-strong {
    stroke: #a349a4;
    stroke-width: 1;
}

.ink-red {
    fill: none;
    stroke: #c86a70;
    stroke-width: .700;
}

.ink-olive {
    fill: none;
    stroke: #8f8f30;
    stroke-width: .700;
}

.hscroll {
    position: absolute;
    left: 9px;
    top: 316px;
    width: 784px;
    height: 2px;
    background: #8d8d8d;
}

.vscroll {
    position: absolute;
    right: 4px;
    top: 8px;
    width: 3px;
    height: 292px;
    background: #8d8d8d;
}

.paint-status {
    height: 17px;
    background: #fbfbfb;
    display: flex;
    align-items: center;
    padding-left: 9px;
    color: #666;
}

.ps-icon { width: 7px; height: 7px; margin-right: 3px; }
.ps-pos { width: 64px; }
.ps-sel { width: 8px; height: 8px; margin-right: 66px; }
.ps-dim { width: 8px; height: 8px; margin-right: 3px; }
.ps-zoom { margin-left: auto; width: 26px; }
.ps-minus { width: 7px; height: 1px; background: #666; margin-right: 7.500px; }

.ps-slider {
    width: 70px;
    height: 2px;
    background: #999;
    position: relative;
    margin-right: 7px;
}

.ps-slider i {
    position: absolute;
    left: 0;
    top: 0;
    width: 27px;
    height: 2px;
    background: #8e3d9e;
}

.ps-slider i::after {
    content: "";
    position: absolute;
    left: 22px;
    top: -3px;
    width: 6px;
    height: 6px;
    border: 1px solid #fff;
    border-radius: 50%;
    background: #8e3d9e;
}

.ps-plus {
    width: 7px;
    height: 7px;
    margin-right: 8px;
    stroke: #666;
}

/* Taskbar of the shared screen */
.mini-task {
    height: 26px;
    display: flex;
    align-items: center;
    color: #ddd;
    background: linear-gradient(90deg, #222 0%, #2a2622 25%, #4a1f18 50%, #55201a 62%, #38221e 78%, #252525 100%);
}

.mini-weather {
    width: 107px;
    display: flex;
    align-items: center;
    gap: 4px;
    padding-left: 10px;
    box-sizing: border-box;
    line-height: 9px;
}

.mini-weather span {
    display: block;
}

.mini-cloud {
    width: 14px;
    height: 10px;
    color: #cfe3f5;
}

.mini-win {
    width: 13px;
    height: 13px;
}

.mini-search {
    width: 54px;
    height: 18px;
    margin-left: 7px;
    border-radius: 9px;
    background: #2f2b29;
    display: flex;
    align-items: center;
    justify-content: center;
    gap: 3px;
    font-size: 6.500px;
}

.mini-search svg {
    width: 7px;
    height: 7px;
}

.mini-apps {
    display: flex;
    align-items: center;
    margin-left: 3px;
}

.mini-apps > svg {
    width: 13px;
    height: 13px;
    margin: 0 5.350px;
    position: relative;
}

.mini-current {
    width: 22px;
    height: 22px;
    margin-left: 1px;
    border-radius: 3px;
    background: rgba(255, 255, 255, 0.1);
    display: flex;
    align-items: center;
    justify-content: center;
    border-bottom: 1px solid #d9a7e8;
    box-sizing: border-box;
}

.mini-current svg {
    width: 13px;
    height: 13px;
}

.mini-tray {
    margin-left: auto;
    display: flex;
    align-items: center;
    padding-right: 9px;
}

.mt-chev { width: 8px; height: 8px; margin-right: 5px; }
.mt-sync { width: 10px; height: 10px; margin-right: 5px; }
.mt-mic { width: 6px; height: 10px; color: #ccc; margin-right: 8px; }
.mt-pen { width: 9px; height: 9px; margin-right: 9px; }
.mt-sm { width: 9px; height: 8px; color: #ddd; margin-right: 4px; }
.mt-note { width: 8px; height: 8px; margin-left: 5px; }

.mt-lang {
    width: 18px;
    margin-right: 7px;
    text-align: center;
    line-height: 9px;
}

.mt-lang span, .mt-clock span {
    display: block;
}

.mt-clock {
    width: 36px;
    text-align: right;
    line-height: 9px;
    white-space: nowrap;
}

/* Pen bar over the canvas */
.pen-bar {
    position: absolute;
    left: 421px;
    top: 161px;
    width: 28px;
    height: 208px;
    box-sizing: border-box;
    padding: 6px 0;
    border: 2px solid #9ea3a8;
    border-radius: 6px;
    background: rgba(50, 40, 50, 0.82);
    display: flex;
    flex-direction: column;
    align-items: center;
    justify-content: space-between;
}

.pen-bar svg {
    width: 14px;
    height: 14px;
}

.pen-cursor {
    width: 16px;
    height: 16px;
    border-radius: 50%;
    background: #d8d8d8;
    border: 1px solid #eee;
    display: flex;
    align-items: center;
    justify-content: center;
}

.pen-cursor svg {
    width: 9px;
    height: 11px;
}

.floater {
    position: absolute;
    right: 0;
    top: 19px;
    width: 13px;
    height: 22px;
    background: #b5b5b5;
    display: flex;
    justify-content: center;
}

.floater svg {
    width: 11px;
    height: 20px;
}

/* Meeting action bar */
.meet-actions {
    flex: 1;
    display: flex;
    align-items: center;
    justify-content: space-between;
    padding: 0 22px 0 536px;
}

.action-group {
    display: flex;
    gap: 21px;
}

.action {
    width: 42px;
    height: 42px;
    box-sizing: border-box;
    border: 2.500px solid #fff;
    border-radius: 50%;
    display: flex;
    align-items: center;
    justify-content: center;
    position: relative;
}

.action svg {
    width: 24px;
    height: 24px;
}

.action-on {
    border: none;
    background: #2b48f0;
}

.audio-more {
    position: absolute;
    left: 30px;
    top: 27px;
    width: 16px;
    height: 16px;
    border: 2px solid #0d1a2b;
    box-sizing: border-box;
    border-radius: 50%;
    background: #000;
    display: flex;
    align-items: center;
    justify-content: center;
}

.audio-more svg {
    width: 10px;
    height: 10px;
}

/* Windows taskbar */
.taskbar {
    height: 48px;
    box-sizing: border-box;
    border-top: 1px solid #a9bcc2;
    background: #cfe6ec;
    display: flex;
    align-items: center;
    padding-left: 21px;
    color: #1b1b1b;
}

.tb-win {
    width: 23px;
    height: 23px;
    margin-right: 13px;
}

.tb-search {
    width: 219px;
    height: 31px;
    margin-right: 2px;
    box-sizing: border-box;
    border: 1px solid #b9d2d9;
    border-radius: 16px;
    background: #eef8fa;
    display: flex;
    align-items: center;
    padding-left: 10px;
    font-size: 13.500px;
    color: #555;
    overflow: hidden;
}

.tb-glass {
    width: 18px;
    height: 18px;
    margin-right: 8px;
}

.tb-tree {
    width: 54px;
    height: 31px;
    margin-left: auto;
}

.tb-app {
    width: 44px;
    height: 40px;
    display: flex;
    align-items: center;
    justify-content: center;
    position: relative;
}

.tb-app > svg {
    width: 24px;
    height: 24px;
    margin-top: -2px;
}

.tb-open::after {
    content: "";
    position: absolute;
    left: 19px;
    bottom: 1px;
    width: 6px;
    height: 3px;
    border-radius: 2px;
    background: #7b8a90;
}

.tb-discord {
    background: linear-gradient(90deg, transparent 2px, #fbe2e6 2px, #fbe2e6 42px, transparent 42px);
}

.tb-discord::after {
    background: #d8262c;
}

.tb-badge {
    position: absolute;
    left: 27px;
    top: 2px;
    width: 11px;
    height: 11px;
    border-radius: 50%;
    background: #e85a5a;
    border: 2px solid #fbe2e6;
}

.tb-temp {
    position: absolute;
    left: 19px;
    top: 3px;
    padding: 0 3px;
    height: 14px;
    line-height: 14px;
    border-radius: 8px;
    background: #f2f8fa;
    font-size: 11px;
}

.tb-active {
    background: linear-gradient(90deg, transparent 3px, #e6f3f6 3px);
}

.tb-active::after {
    left: 15px;
    width: 14px;
    background: #0f7f86;
}

.tb-profile {
    position: absolute;
    left: 22px;
    top: 2px;
    width: 16px;
    height: 16px;
    border-radius: 50%;
    background: #5c6bc0;
    color: #fff;
    font-size: 9px;
    display: flex;
    align-items: center;
    justify-content: center;
}

.tray {
    margin-left: auto;
    padding-right: 18px;
    display: flex;
    align-items: center;
    font-size: 12px;
}

.tray-slot {
    width: 32px;
    display: flex;
    justify-content: center;
}

svg.tray-chev {
    height: 16px;
}

.tray-cloud {
    width: 18px;
    height: 12px;
    color: #555;
}

.tray-mic {
    width: 11px;
    height: 18px;
    color: #3f7c96;
}

.tray-lang {
    width: 44px;
    text-align: center;
    line-height: 16px;
}

.tray-lang span, .tray-clock span {
    display: block;
}

.tray-sm {
    width: 16px;
    height: 14px;
    margin-left: 7.500px;
    color: #222;
}

.tray-clock {
    width: 81px;
    text-align: right;
    line-height: 16px;
}

.tray-note {
    width: 17px;
    height: 17px;
    margin-left: 7px;
    border-radius: 50%;
    background: #0f5f70;
    color: #fff;
    font-size: 10px;
    font-weight: bold;
    display: flex;
    align-items: center;
    justify-content: center;
}
```
